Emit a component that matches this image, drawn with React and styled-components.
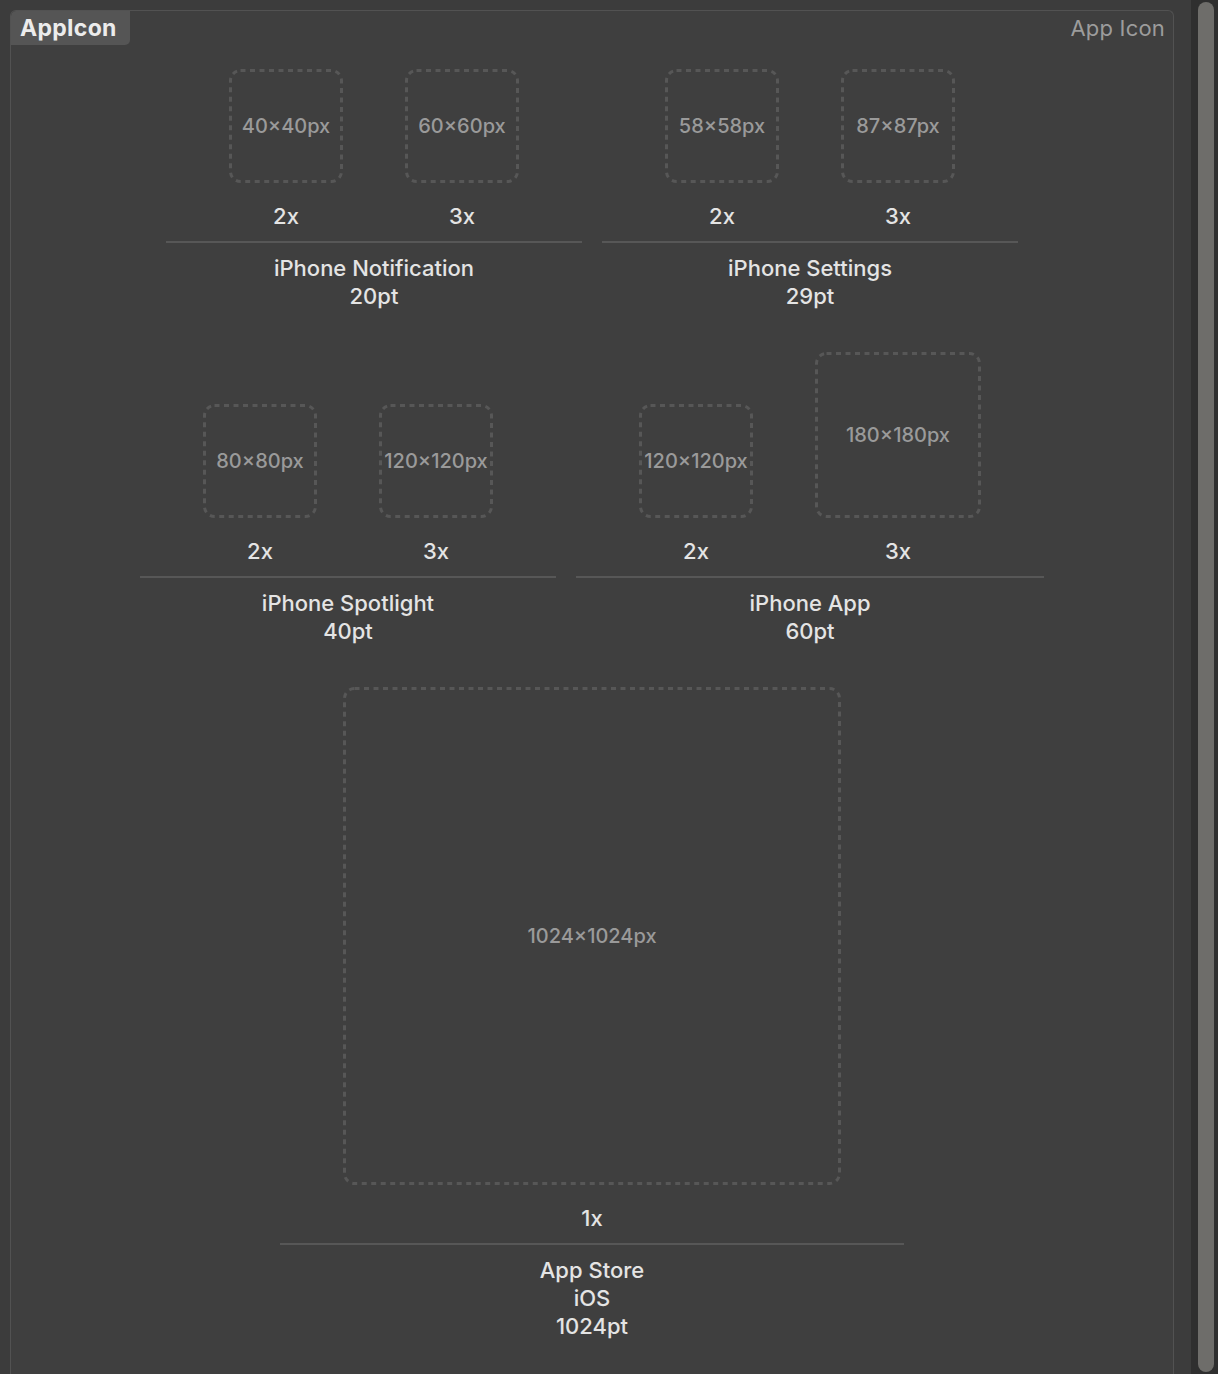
import React from "react";
import styled, { createGlobalStyle } from "styled-components";

const GlobalStyle = createGlobalStyle`
  html, body {
    margin: 0;
    padding: 0;
    background: #3c3c3c;
  }
  body {
    font-family: Inter, "Noto Sans", "Liberation Sans", sans-serif;
    -webkit-font-smoothing: antialiased;
  }
`;

const Window = styled.div`
  display: flex;
  height: 1374px;
  overflow: hidden;
`;

const Main = styled.div`
  flex: 1;
  display: flex;
  padding: 10px 17px 0 10px;
`;

const Panel = styled.div`
  flex: 1;
  display: flex;
  flex-direction: column;
  background: #3f3f3f;
  border: 1px solid #525252;
  border-bottom: none;
  border-radius: 6px 6px 0 0;
  overflow: hidden;
`;

const PanelHeader = styled.div`
  display: flex;
  justify-content: space-between;
  align-items: flex-start;
`;

const Tab = styled.div`
  height: 34px;
  width: 119px;
  box-sizing: border-box;
  padding: 0 0 0 9px;
  display: flex;
  align-items: center;
  background: #555555;
  border-radius: 5px 0 5px 0;
  color: #ececec;
  font-size: 23px;
  font-weight: 700;
  letter-spacing: 0.3px;
`;

const SetName = styled.div`
  padding: 3px 8px 0 0;
  color: #9c9c9c;
  font-size: 22px;
  line-height: 28px;
  letter-spacing: 0.2px;
`;

const Rows = styled.div`
  display: flex;
  flex-direction: column;
  align-items: center;
  gap: 42px;
  padding-top: 24px;
`;

const Row = styled.div`
  display: flex;
  justify-content: center;
  align-items: flex-end;
  gap: 20px;
`;

const Group = styled.div`
  display: flex;
  flex-direction: column;
  align-items: stretch;
`;

const Slots = styled.div`
  display: flex;
  align-items: flex-end;
  padding: 0 32px;
`;

const Slot = styled.div`
  width: ${({ $size }) => $size + 62}px;
  display: flex;
  flex-direction: column;
  align-items: center;
`;

const Well = styled.div`
  position: relative;
  width: ${({ $size }) => $size}px;
  height: ${({ $size }) => $size}px;
  display: flex;
  align-items: center;
  justify-content: center;
  color: #9a9a9a;
  font-size: 20px;
  font-weight: 500;
  white-space: nowrap;
`;

const DashFrame = styled.svg`
  position: absolute;
  inset: 0;
`;

const Scale = styled.div`
  margin-top: 19px;
  line-height: 28px;
  font-size: 22px;
  font-weight: 500;
  color: #e4e4e4;
`;

const Divider = styled.div`
  height: 2px;
  margin-top: 11px;
  background: #575757;
`;

const Titles = styled.div`
  margin-top: 11px;
  display: flex;
  flex-direction: column;
  align-items: center;
  font-size: 22px;
  font-weight: 500;
  line-height: 28px;
  color: #e4e4e4;
`;

const Scrollbar = styled.div`
  width: 27px;
  display: flex;
  padding: 2px 4px 2px 7px;
  box-sizing: border-box;
  background: #2f2f2f;
`;

const Thumb = styled.div`
  flex: 1;
  border-radius: 8px;
  background: #6e6d6a;
`;

const rows = [
  [
    {
      title: ["iPhone Notification", "20pt"],
      slots: [
        { scale: "2x", px: "40×40px", size: 114 },
        { scale: "3x", px: "60×60px", size: 114 },
      ],
    },
    {
      title: ["iPhone Settings", "29pt"],
      slots: [
        { scale: "2x", px: "58×58px", size: 114 },
        { scale: "3x", px: "87×87px", size: 114 },
      ],
    },
  ],
  [
    {
      title: ["iPhone Spotlight", "40pt"],
      slots: [
        { scale: "2x", px: "80×80px", size: 114 },
        { scale: "3x", px: "120×120px", size: 114 },
      ],
    },
    {
      title: ["iPhone App", "60pt"],
      slots: [
        { scale: "2x", px: "120×120px", size: 114 },
        { scale: "3x", px: "180×180px", size: 166 },
      ],
    },
  ],
  [
    {
      title: ["App Store", "iOS", "1024pt"],
      slots: [{ scale: "1x", px: "1024×1024px", size: 498 }],
    },
  ],
];

const IconWell = ({ size, label }) => (
  <Well $size={size}>
    <DashFrame width={size} height={size}>
      <rect
        x="1.5"
        y="1.5"
        width={size - 3}
        height={size - 3}
        rx="10"
        fill="none"
        stroke="#575757"
        strokeWidth="3"
        strokeDasharray="5 4.5"
      />
    </DashFrame>
    {label}
  </Well>
);

const App = () => {
  return (
    <>
      <GlobalStyle />
      <Window>
        <Main>
          <Panel>
            <PanelHeader>
              <Tab>AppIcon</Tab>
              <SetName>App Icon</SetName>
            </PanelHeader>
            <Rows>
              {rows.map((row, i) => (
                <Row key={i}>
                  {row.map((group) => (
                    <Group key={group.title[0]}>
                      <Slots>
                        {group.slots.map((s) => (
                          <Slot key={s.scale} $size={s.size}>
                            <IconWell size={s.size} label={s.px} />
                            <Scale>{s.scale}</Scale>
                          </Slot>
                        ))}
                      </Slots>
                      <Divider />
                      <Titles>
                        {group.title.map((t) => (
                          <span key={t}>{t}</span>
                        ))}
                      </Titles>
                    </Group>
                  ))}
                </Row>
              ))}
            </Rows>
          </Panel>
        </Main>
        <Scrollbar>
          <Thumb />
        </Scrollbar>
      </Window>
    </>
  );
};

export default App;
